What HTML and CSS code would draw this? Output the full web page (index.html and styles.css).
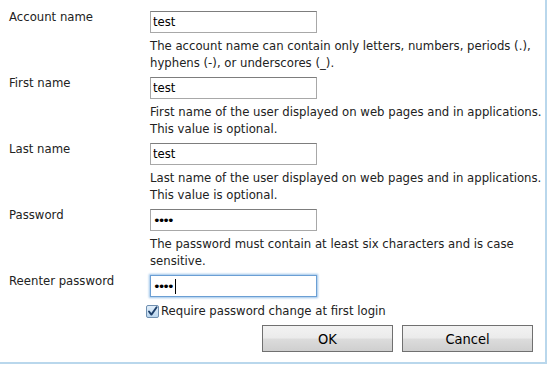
FILE: index.html
```html
<!DOCTYPE html>
<html>
<head>
    <title>New user</title>
    <link rel="stylesheet" href="styles.css">
</head>
<body>
    <div class="dialog">
        <div class="form">
            <div class="row">
                <label class="label" for="account">Account name</label>
                <div class="field">
                    <input class="text" id="account" type="text" value="test">
                    <div class="help">The account name can contain only letters, numbers, periods (.), hyphens (-), or underscores (_).</div>
                </div>
            </div>
            <div class="row">
                <label class="label" for="first">First name</label>
                <div class="field">
                    <input class="text" id="first" type="text" value="test">
                    <div class="help">First name of the user displayed on web pages and in applications. This value is optional.</div>
                </div>
            </div>
            <div class="row">
                <label class="label" for="last">Last name</label>
                <div class="field">
                    <input class="text" id="last" type="text" value="test">
                    <div class="help">Last name of the user displayed on web pages and in applications. This value is optional.</div>
                </div>
            </div>
            <div class="row">
                <label class="label" for="password">Password</label>
                <div class="field">
                    <input class="text secret" id="password" type="password" value="test">
                    <div class="help">The password must contain at least six characters and is case sensitive.</div>
                </div>
            </div>
            <div class="row">
                <label class="label" for="reenter">Reenter password</label>
                <div class="field">
                    <div class="text focused">
                        <span class="dots">&#8226;&#8226;&#8226;&#8226;</span><span class="caret"></span>
                    </div>
                    <label class="check">
                        <svg class="box" width="13" height="13" viewBox="0 0 13 13">
                            <defs>
                                <linearGradient id="boxfill" x1="0" y1="0" x2="0" y2="1">
                                    <stop offset="0" stop-color="#e4f0fb"/>
                                    <stop offset="1" stop-color="#b9d5ee"/>
                                </linearGradient>
                            </defs>
                            <rect x="0.5" y="0.5" width="12" height="12" rx="1.5" fill="url(#boxfill)" stroke="#6f8fb0"/>
                            <path d="M3 6.5 L5.4 9.6 L10.6 2.2" fill="none" stroke="#1d3f6a" stroke-width="1.9" stroke-linecap="round" stroke-linejoin="round"/>
                        </svg>
                        Require password change at first login
                    </label>
                </div>
            </div>
        </div>
        <div class="buttons">
            <button class="btn">OK</button>
            <button class="btn">Cancel</button>
        </div>
    </div>
</body>
</html>
```

FILE: styles.css
```css
body {
    margin: 0;
    padding: 0;
    background-color: #fff;
    font-family: "DejaVu Sans", Verdana, sans-serif;
    font-size: 11.7px;
    color: #222;
}

.dialog {
    width: 547px;
    height: 364px;
    background-color: #fff;
    border-right: 2px solid #b9d7ec;
    border-bottom: 2px solid #b9d7ec;
    padding-top: 9px;
    box-sizing: border-box;
}

.row {
    display: flex;
    align-items: flex-start;
}

.row .label {
    width: 141px;
    padding-left: 9px;
    line-height: 17px;
}

.row .field {
    flex: 1;
    padding-top: 2px;
}

.text {
    display: block;
    width: 167px;
    height: 22px;
    margin: 0;
    padding: 0 2px;
    box-sizing: border-box;
    border: 1px solid #a8a8a8;
    border-top-color: #7d7d7d;
    font-family: inherit;
    font-size: 11.7px;
    color: #000;
    outline: none;
}

.secret {
    font-size: 13px;
    letter-spacing: -3px;
}

.help {
    margin: 5px 0 3px;
    line-height: 17px;
}

.focused {
    display: flex;
    align-items: center;
    border-color: #6b9fd4;
    box-shadow: 0 0 2px 1px #9cc4ea;
}

.focused .dots {
    font-size: 13px;
    letter-spacing: -3px;
}

.focused .caret {
    width: 1px;
    height: 15px;
    margin-left: 3px;
    background-color: #000;
}

.check {
    display: flex;
    align-items: center;
    gap: 2px;
    margin: 6px 0 0 -4px;
    line-height: 17px;
}

.buttons {
    display: flex;
    justify-content: flex-end;
    gap: 9px;
    padding-right: 12px;
    margin-top: 5px;
}

.btn {
    width: 131px;
    height: 27px;
    border: 1px solid #707070;
    background: linear-gradient(#f2f2f2, #ebebeb 48%, #dcdcdc 52%, #cfcfcf);
    font-family: "DejaVu Sans Condensed", "DejaVu Sans", sans-serif;
    font-stretch: condensed;
    font-size: 14.5px;
    color: #000;
}
```
